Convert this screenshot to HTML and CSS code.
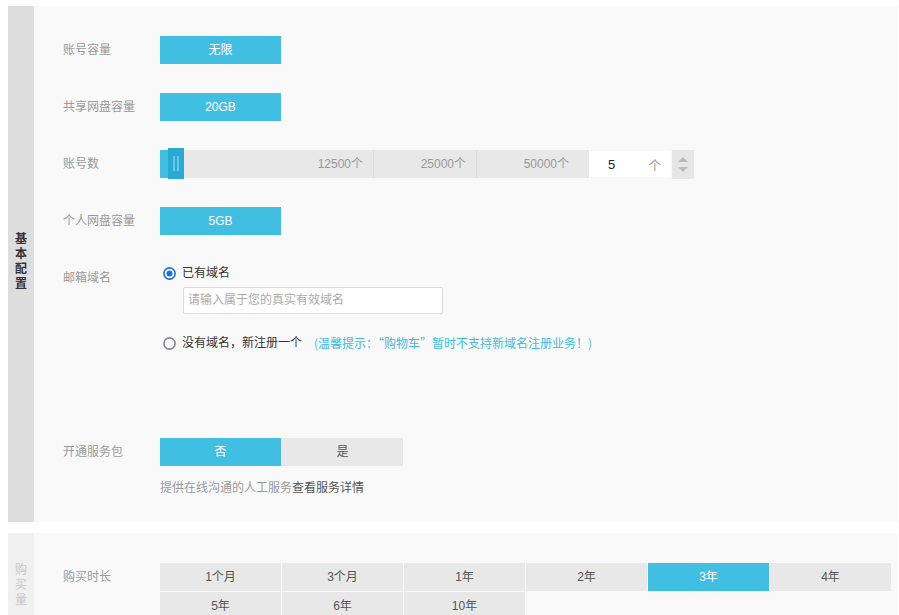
FILE: index.html
```html
<!DOCTYPE html>
<html lang="zh">
<head>
<meta charset="utf-8">
<title>配置</title>
<link rel="stylesheet" href="styles.css">
</head>
<body>
<div class="page">
  <section class="section basic">
    <div class="side"><span class="side-text">基本配置</span></div>
    <div class="main">
      <div class="row">
        <div class="label">账号容量</div>
        <div class="btn active">无限</div>
      </div>
      <div class="row">
        <div class="label">共享网盘容量</div>
        <div class="btn active">20GB</div>
      </div>
      <div class="row">
        <div class="label">账号数</div>
        <div class="slider">
          <div class="track">
            <div class="seg seg1">12500个</div>
            <div class="seg seg2">25000个</div>
            <div class="seg seg3">50000个</div>
            <div class="fill"></div>
            <div class="handle"><i></i><i></i></div>
          </div>
          <div class="num-box"><span class="num">5</span><span class="unit">个</span></div>
          <div class="spinner">
            <span class="tri up"></span>
            <span class="tri down"></span>
          </div>
        </div>
      </div>
      <div class="row">
        <div class="label">个人网盘容量</div>
        <div class="btn active">5GB</div>
      </div>
      <div class="row">
        <div class="label">邮箱域名</div>
        <div class="options">
          <div class="radio-line">
            <svg class="radio" width="13" height="13" viewBox="0 0 13 13"><circle cx="6.5" cy="6.5" r="5.6" fill="#fff" stroke="#1a6fe0" stroke-width="1.6"/><circle cx="6.5" cy="6.5" r="3" fill="#1a6fe0"/></svg>
            <span class="radio-text">已有域名</span>
          </div>
          <div class="domain-input">请输入属于您的真实有效域名</div>
          <div class="radio-line second">
            <svg class="radio" width="13" height="13" viewBox="0 0 13 13"><circle cx="6.5" cy="6.5" r="5.6" fill="#fff" stroke="#858597" stroke-width="1.6"/></svg>
            <span class="radio-text">没有域名，新注册一个</span>
            <span class="tip">(温馨提示：“购物车”暂时不支持新域名注册业务！)</span>
          </div>
        </div>
      </div>
      <div class="row service">
        <div class="label">开通服务包</div>
        <div class="group">
          <div class="btn active">否</div>
          <div class="btn">是</div>
        </div>
      </div>
      <div class="note">提供在线沟通的人工服务<span class="link">查看服务详情</span></div>
    </div>
  </section>
  <section class="section buy">
    <div class="side light"><span class="side-text">购买量</span></div>
    <div class="main">
      <div class="row">
        <div class="label">购买时长</div>
        <div class="grid">
          <div class="cell">1个月</div>
          <div class="cell">3个月</div>
          <div class="cell">1年</div>
          <div class="cell">2年</div>
          <div class="cell active">3年</div>
          <div class="cell">4年</div>
          <div class="cell">5年</div>
          <div class="cell">6年</div>
          <div class="cell">10年</div>
        </div>
      </div>
    </div>
  </section>
</div>
</body>
</html>
```
FILE: styles.css
```css
html, body {
  margin: 0;
  padding: 0;
  background: #fff;
}
body {
  font-family: "Liberation Sans", "Noto Sans CJK SC", sans-serif;
  font-size: 12px;
  color: #333;
}
.page {
  padding: 6px 1px 0 8px;
  height: 609px;
  overflow: hidden;
}
.section {
  display: flex;
  background: #f9f9f9;
}
.section.buy {
  margin-top: 11px;
  height: 82px;
  overflow: hidden;
}
.side {
  width: 26px;
  flex: none;
  background: #dddddd;
  display: flex;
  align-items: center;
  justify-content: center;
}
.side-text {
  width: 12px;
  line-height: 15px;
  font-weight: bold;
  color: #333;
  padding-bottom: 5px;
}
.side.light {
  background: #f0f0f0;
  align-items: flex-start;
  padding-top: 30px;
}
.side.light .side-text {
  color: #c8c8c8;
  font-weight: normal;
  padding-bottom: 0;
}
.main {
  flex: 1;
  padding: 30px 0 26px 29px;
}
.row {
  display: flex;
  align-items: flex-start;
}
.row + .row {
  margin-top: 29px;
}
.row.service {
  margin-top: 86px;
}
.label {
  width: 97px;
  flex: none;
  line-height: 28px;
  color: #999;
}
.btn {
  width: 121px;
  height: 28px;
  line-height: 28px;
  text-align: center;
  background: #e8e8e8;
  color: #555;
}
.btn.active {
  background: #41bfe3;
  color: #fff;
}
.group {
  display: flex;
  gap: 1px;
}
/* slider */
.slider {
  display: flex;
  align-items: flex-start;
  height: 28px;
}
.track {
  position: relative;
  display: flex;
  height: 28px;
  background: #e8e8e8;
}
.seg {
  line-height: 28px;
  text-align: right;
  color: #999;
  padding-right: 10px;
  box-sizing: border-box;
}
.seg1 { width: 214px; border-right: 1px solid #dcdcdc; }
.seg2 { width: 103px; border-right: 1px solid #dcdcdc; }
.seg3 { width: 112px; padding-right: 20px; }
.fill {
  position: absolute;
  left: 0;
  top: 0;
  width: 8px;
  height: 28px;
  background: #41bfe3;
}
.handle {
  position: absolute;
  left: 8px;
  top: -2px;
  width: 16px;
  height: 31px;
  background: #2aaad3;
  display: flex;
  justify-content: center;
  align-items: center;
  gap: 2px;
}
.handle i {
  display: block;
  width: 2px;
  height: 15px;
  background: #66c6e4;
}
.num-box {
  width: 81px;
  height: 26px;
  margin-top: 1px;
  background: #fff;
  display: flex;
  align-items: center;
  box-sizing: border-box;
}
.num {
  margin-left: 19px;
  font-size: 13px;
  color: #222;
}
.unit {
  margin-left: 33px;
  color: #999;
  font-size: 13px;
}
.spinner {
  width: 22px;
  height: 29px;
  flex: none;
  margin-left: 2px;
  background: #e6e6e6;
  display: flex;
  flex-direction: column;
  align-items: center;
  justify-content: center;
  gap: 5px;
}
.tri {
  width: 0;
  height: 0;
  border-left: 5px solid transparent;
  border-right: 5px solid transparent;
}
.tri.up { border-bottom: 5px solid #bbb; }
.tri.down { border-top: 5px solid #bbb; }
/* email */
.options {
  padding-left: 3px;
}
.radio-line {
  display: flex;
  align-items: center;
  height: 18px;
  line-height: 18px;
}
.radio-line.second {
  margin-top: 20px;
}
.radio {
  flex: none;
  margin-right: 6px;
}
.radio-text {
  color: #333;
}
.tip {
  margin-left: 12px;
  color: #3fb9e1;
  font-family: "Noto Sans CJK SC", sans-serif;
}
.domain-input {
  width: 260px;
  height: 27px;
  box-sizing: border-box;
  margin: 5px 0 0 20px;
  border: 1px solid #dcdcdc;
  border-radius: 2px;
  background: #fff;
  line-height: 25px;
  padding-left: 4px;
  color: #aaa;
}
.note {
  margin: 14px 0 0 97px;
  line-height: 16px;
  color: #999;
}
.note .link {
  color: #555;
}
/* grid */
.grid {
  display: grid;
  grid-template-columns: repeat(6, 121px);
  grid-auto-rows: 28px;
  gap: 1px;
}
.cell {
  background: #e8e8e8;
  color: #555;
  line-height: 28px;
  text-align: center;
}
.cell.active {
  background: #41bfe3;
  color: #fff;
}
```
